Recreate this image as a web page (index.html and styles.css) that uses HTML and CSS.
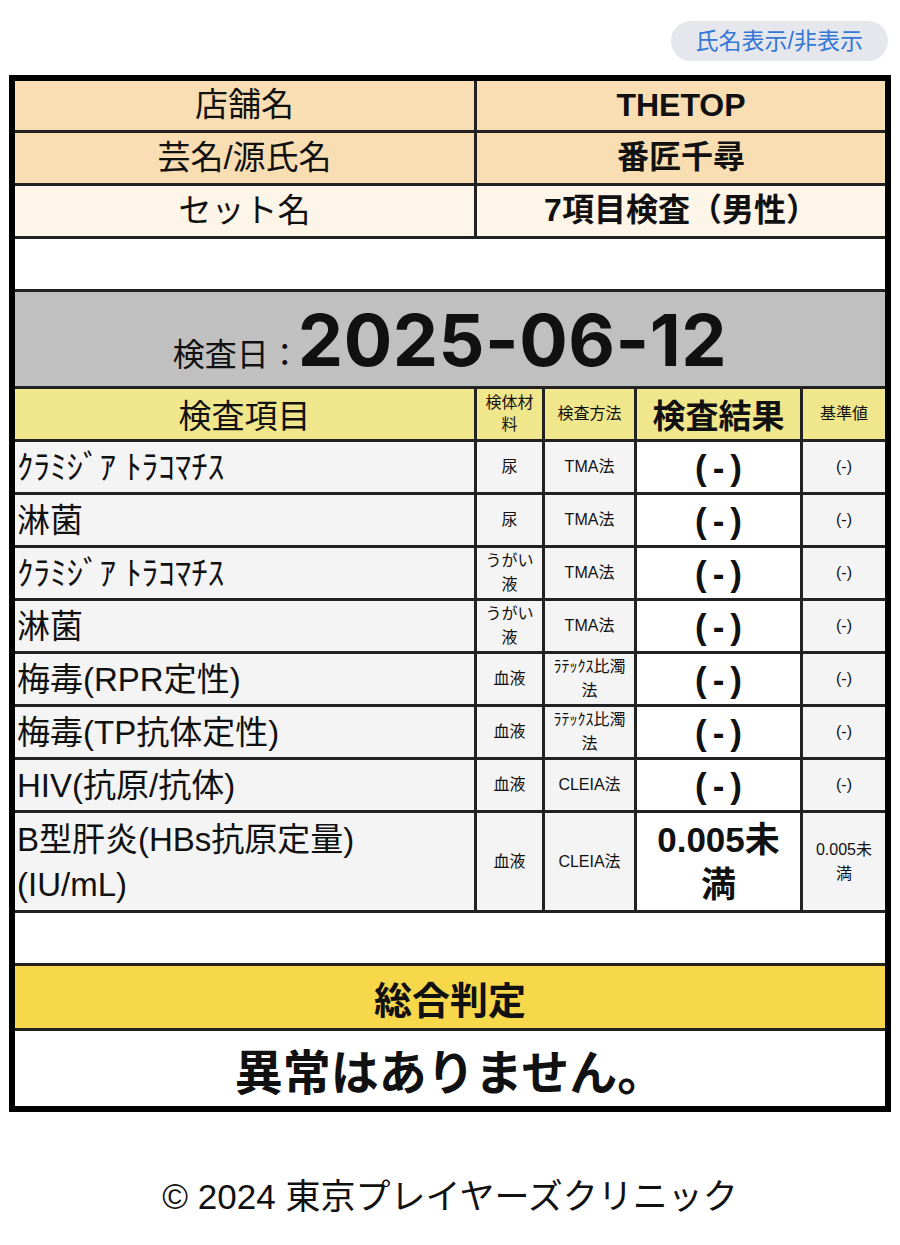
FILE: index.html
```html
<!DOCTYPE html>
<html lang="ja">
<head>
<meta charset="utf-8">
<title>検査結果</title>
<link rel="stylesheet" href="styles.css">
</head>
<body>
<div class="page">
  <div class="toolbar"><button class="toggle" type="button">氏名表示/非表示</button></div>
  <div class="report">
    <div class="cell label peach">店舗名</div>
    <div class="cell value peach">THETOP</div>
    <div class="cell label peach">芸名/源氏名</div>
    <div class="cell value peach">番匠千尋</div>
    <div class="cell label cream">セット名</div>
    <div class="cell value cream">7項目検査（男性）</div>
    <div class="cell full blank"></div>
    <div class="cell full date-row"><span class="date-line"><span class="date-label">検査日：</span><span class="date">2025-06-12</span></span></div>

    <div class="cell head head-big">検査項目</div>
    <div class="cell head head-small">検体材料</div>
    <div class="cell head head-small">検査方法</div>
    <div class="cell head head-big head-bold">検査結果</div>
    <div class="cell head head-small">基準値</div>

    <div class="cell item">ｸﾗﾐｼﾞｱ ﾄﾗｺﾏﾁｽ</div>
    <div class="cell small">尿</div>
    <div class="cell small">TMA法</div>
    <div class="cell result">(-)</div>
    <div class="cell small">(-)</div>

    <div class="cell item">淋菌</div>
    <div class="cell small">尿</div>
    <div class="cell small">TMA法</div>
    <div class="cell result">(-)</div>
    <div class="cell small">(-)</div>

    <div class="cell item">ｸﾗﾐｼﾞｱ ﾄﾗｺﾏﾁｽ</div>
    <div class="cell small">うがい液</div>
    <div class="cell small">TMA法</div>
    <div class="cell result">(-)</div>
    <div class="cell small">(-)</div>

    <div class="cell item">淋菌</div>
    <div class="cell small">うがい液</div>
    <div class="cell small">TMA法</div>
    <div class="cell result">(-)</div>
    <div class="cell small">(-)</div>

    <div class="cell item">梅毒(RPR定性)</div>
    <div class="cell small">血液</div>
    <div class="cell small">ﾗﾃｯｸｽ比濁法</div>
    <div class="cell result">(-)</div>
    <div class="cell small">(-)</div>

    <div class="cell item">梅毒(TP抗体定性)</div>
    <div class="cell small">血液</div>
    <div class="cell small">ﾗﾃｯｸｽ比濁法</div>
    <div class="cell result">(-)</div>
    <div class="cell small">(-)</div>

    <div class="cell item">HIV(抗原/抗体)</div>
    <div class="cell small">血液</div>
    <div class="cell small">CLEIA法</div>
    <div class="cell result">(-)</div>
    <div class="cell small">(-)</div>

    <div class="cell item">B型肝炎(HBs抗原定量)<br>(IU/mL)</div>
    <div class="cell small">血液</div>
    <div class="cell small">CLEIA法</div>
    <div class="cell result"><span class="result-wrap">0.005未満</span></div>
    <div class="cell small"><span class="ref-wrap">0.005未満</span></div>

    <div class="cell full blank"></div>
    <div class="cell full verdict-head">総合判定</div>
    <div class="cell full verdict">異常はありません。</div>
  </div>
  <footer class="footer">© 2024 東京プレイヤーズクリニック</footer>
</div>
</body>
</html>
```

FILE: styles.css
```css
html, body {
  margin: 0;
  padding: 0;
  background: #ffffff;
}

body {
  font-family: "Liberation Sans", "Noto Sans CJK JP", sans-serif;
  color: #111111;
}

.page {
  padding: 21px 9px 0 9px;
}

.toolbar {
  display: flex;
  justify-content: flex-end;
  padding-right: 3px;
  margin-bottom: 14px;
}

.toggle {
  height: 40px;
  padding: 0 25px;
  border: none;
  border-radius: 20px;
  background: #e5e7ec;
  color: #3577d4;
  font-family: "Liberation Sans", "Noto Sans CJK JP", sans-serif;
  font-size: 23px;
  line-height: 40px;
}

.report {
  display: grid;
  grid-template-columns: 459px 65px 89px 163px 82px;
  grid-template-rows: 49px 50px 50px 50px 94px 50px repeat(7, 50px) 97px 50px 62px 75px;
  gap: 3px;
  border: 6px solid #000000;
  background: #222222;
}

.cell {
  display: flex;
  align-items: center;
  justify-content: center;
  text-align: center;
  background: #f4f4f4;
  min-width: 0;
}

.label {
  grid-column: 1;
  font-size: 33px;
  line-height: 1.3;
}

.value {
  grid-column: 2 / 6;
  font-size: 32px;
  font-weight: 700;
  line-height: 1.3;
}

.peach {
  background: #f8deb2;
}

.cream {
  background: #fdf5e8;
}

.full {
  grid-column: 1 / -1;
}

.blank {
  background: #ffffff;
}

.date-row {
  background: #c0c0c0;
  align-items: flex-end;
  padding-bottom: 10px;
}

.date-line {
  line-height: 1;
  white-space: nowrap;
}

.date-label {
  font-family: "Noto Sans CJK JP", sans-serif;
  font-size: 32px;
}

.date {
  font-family: "Inter", "Liberation Sans", sans-serif;
  font-weight: 700;
  font-size: 72px;
  letter-spacing: 0.5px;
  margin-left: -3px;
}

.head {
  background: #f0e68c;
}

.head-big {
  font-size: 33px;
}

.head-bold {
  font-weight: 700;
}

.head-small {
  font-size: 16px;
  line-height: 22px;
  padding: 0 4px;
}

.item {
  justify-content: flex-start;
  text-align: left;
  padding-left: 2px;
  font-size: 33px;
  line-height: 45px;
}

.small {
  font-size: 16px;
  line-height: 24px;
  padding: 0 4px;
}

.result {
  background: #ffffff;
  font-size: 35px;
  font-weight: 700;
  line-height: 45px;
  letter-spacing: 6px;
  padding-left: 6px;
}

.result-wrap {
  display: block;
  max-width: 4.2em;
  letter-spacing: 0;
  margin-left: -6px;
}

.ref-wrap {
  display: block;
  max-width: 4em;
}

.verdict-head {
  background: #f7d84b;
  font-size: 38px;
  font-weight: 700;
}

.verdict {
  background: #ffffff;
  font-size: 48px;
  font-weight: 700;
}

.footer {
  margin-top: 60px;
  text-align: center;
  font-size: 35px;
  line-height: 50px;
}
```
